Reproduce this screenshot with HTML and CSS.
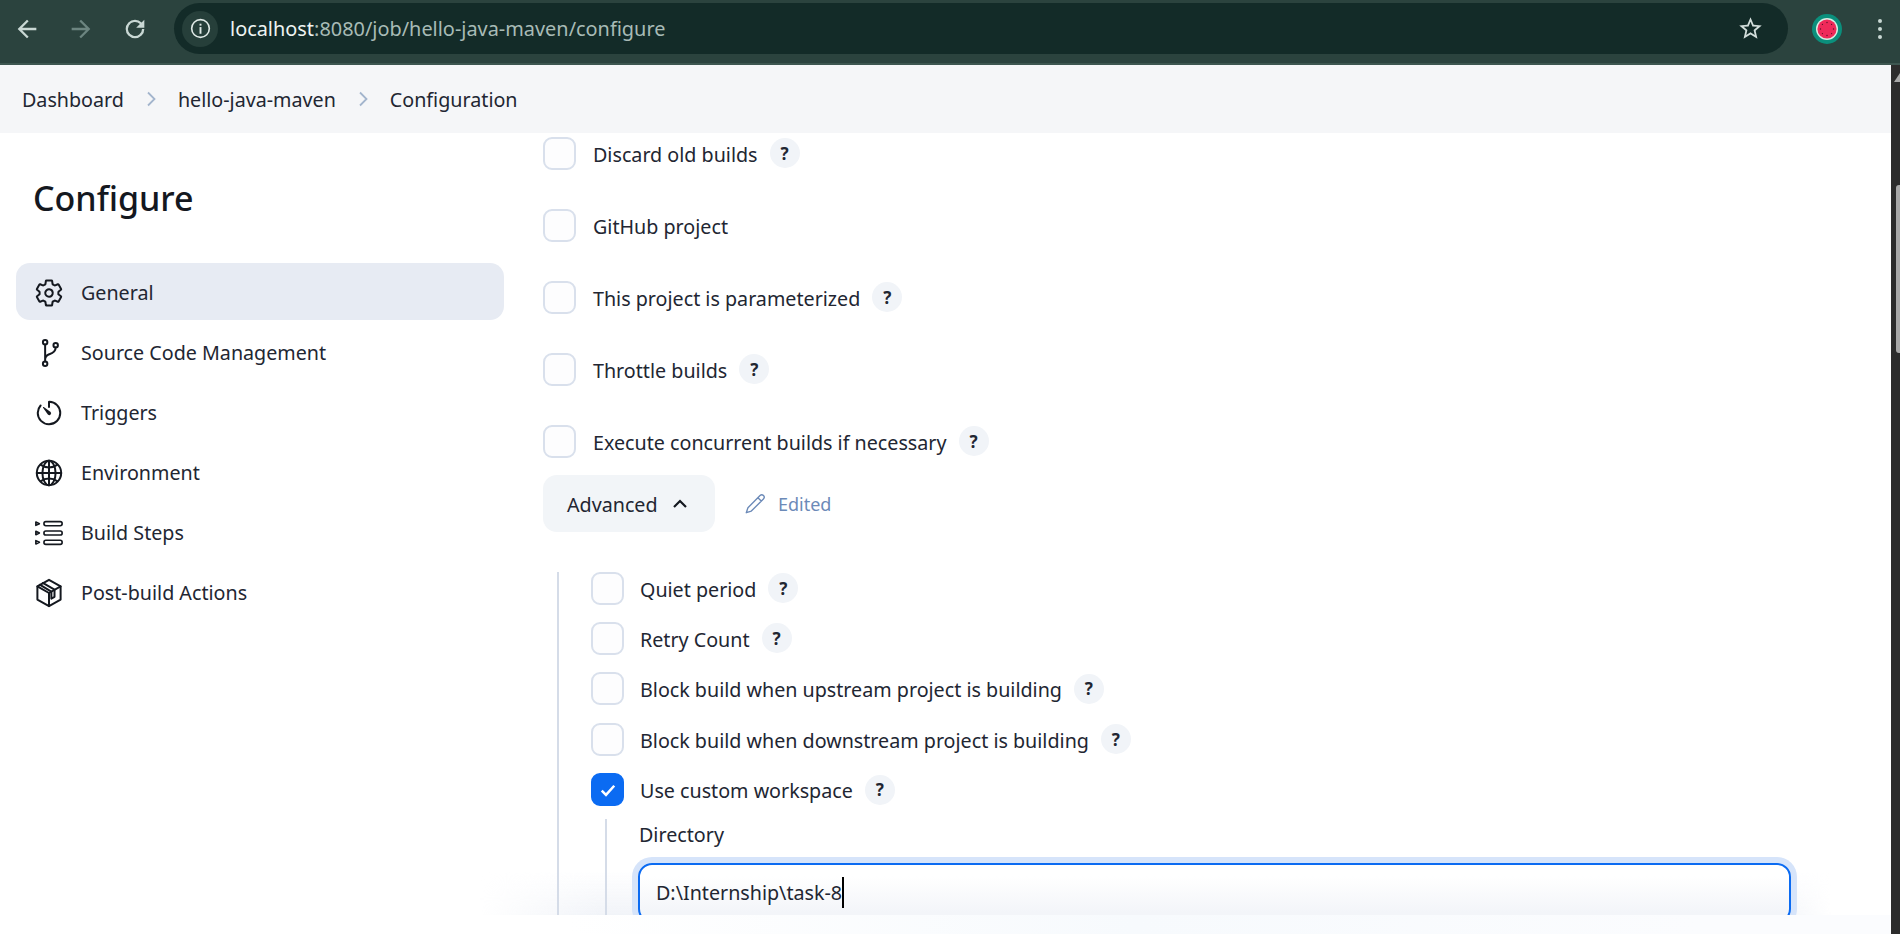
FILE: index.html
```html
<!DOCTYPE html>
<html lang="en">
<head>
    <meta charset="UTF-8">
    <title>hello-java-maven Config - Jenkins</title>
    <link rel="stylesheet" href="styles.css">
</head>
<body>

    <div class="browser-bar">
        <div class="browser-nav">
            <svg class="nav-icon" viewBox="0 0 24 24"><path d="M20 11H7.83l5.59-5.59L12 4l-8 8 8 8 1.41-1.41L7.83 13H20z"/></svg>
            <svg class="nav-icon nav-icon-off" viewBox="0 0 24 24"><path d="M4 11h12.17l-5.59-5.59L12 4l8 8-8 8-1.41-1.41L16.17 13H4z"/></svg>
            <svg class="nav-icon" viewBox="0 0 24 24"><path d="M17.65 6.35A7.95 7.95 0 0012 4a8 8 0 108 8h-2a6 6 0 11-1.78-4.22L13 11h7V4z"/></svg>
        </div>
        <div class="omnibox">
            <span class="site-chip">
                <svg viewBox="0 0 24 24"><circle cx="12" cy="12" r="9.2" fill="none" stroke="#dfe9e6" stroke-width="1.7"/><rect x="11" y="10.5" width="2" height="7" fill="#dfe9e6"/><rect x="11" y="7" width="2" height="2" fill="#dfe9e6"/></svg>
            </span>
            <span class="url"><span class="url-host">localhost</span>:8080/job/hello-java-maven/configure</span>
            <svg class="star" viewBox="0 0 24 24"><path d="M22 9.24l-7.19-.62L12 2 9.19 8.63 2 9.24l5.46 4.73L5.82 21 12 17.27 18.18 21l-1.63-7.03L22 9.24zM12 15.4l-3.76 2.27 1-4.28-3.32-2.88 4.38-.38L12 6.1l1.71 4.04 4.38.38-3.32 2.88 1 4.28L12 15.4z"/></svg>
        </div>
        <svg class="avatar" viewBox="0 0 30 30">
            <circle cx="15" cy="15" r="15" fill="#0b8f7c"/>
            <circle cx="15" cy="15" r="11" fill="#d8efe4"/>
            <circle cx="15" cy="15" r="9.6" fill="#ef2a5a"/>
            <g fill="#5a1028">
                <circle cx="15" cy="8.5" r=".7"/><circle cx="15" cy="21.5" r=".7"/><circle cx="8.5" cy="15" r=".7"/><circle cx="21.5" cy="15" r=".7"/>
                <circle cx="10.4" cy="10.4" r=".6"/><circle cx="19.6" cy="10.4" r=".6"/><circle cx="10.4" cy="19.6" r=".6"/><circle cx="19.6" cy="19.6" r=".6"/>
            </g>
        </svg>
        <div class="menu-dots"><i></i><i></i><i></i></div>
    </div>

    <div class="window">
        <div class="page">
            <div class="breadcrumbs">
                <span>Dashboard</span>
                <svg class="crumb-sep" viewBox="0 0 10 16"><path d="M2 1.5L8.5 8 2 14.5"/></svg>
                <span>hello-java-maven</span>
                <svg class="crumb-sep" viewBox="0 0 10 16"><path d="M2 1.5L8.5 8 2 14.5"/></svg>
                <span>Configuration</span>
            </div>

            <div class="content">
                <aside class="sidebar">
                    <h1 class="side-title">Configure</h1>
                    <nav class="side-nav">
                        <a class="side-item active">
                            <svg class="side-icon" viewBox="0 0 512 512"><path d="M262.29 192.31a64 64 0 1057.4 57.4 64.13 64.13 0 00-57.4-57.4zM416.39 256a154.34 154.34 0 01-1.53 20.79l45.21 35.46a10.81 10.81 0 012.45 13.75l-42.77 74a10.81 10.81 0 01-13.14 4.59l-44.9-18.08a16.11 16.11 0 00-15.17 1.75A164.48 164.48 0 01325 400.8a15.94 15.94 0 00-8.82 12.14l-6.73 47.89a11.08 11.08 0 01-10.68 9.17h-85.54a11.11 11.11 0 01-10.69-8.87l-6.72-47.82a16.07 16.07 0 00-9-12.22 155.3 155.3 0 01-21.46-12.57 16 16 0 00-15.11-1.71l-44.89 18.07a10.81 10.81 0 01-13.14-4.58l-42.77-74a10.8 10.8 0 012.45-13.75l38.21-30a16.05 16.05 0 006-14.08c-.36-4.17-.58-8.33-.58-12.5s.21-8.27.58-12.35a16 16 0 00-6.07-13.94l-38.19-30A10.81 10.81 0 0149.48 186l42.77-74a10.81 10.81 0 0113.14-4.59l44.9 18.08a16.11 16.11 0 0015.17-1.75A164.48 164.48 0 01187 111.2a15.94 15.94 0 008.82-12.14l6.73-47.89A11.08 11.08 0 01213.23 42h85.54a11.11 11.11 0 0110.69 8.87l6.72 47.82a16.07 16.07 0 009 12.22 155.3 155.3 0 0121.46 12.57 16 16 0 0015.11 1.71l44.89-18.07a10.81 10.81 0 0113.14 4.58l42.77 74a10.8 10.8 0 01-2.45 13.75l-38.21 30a16.05 16.05 0 00-6.05 14.08c.33 4.14.55 8.3.55 12.47z"/></svg>
                            General
                        </a>
                        <a class="side-item">
                            <svg class="side-icon" viewBox="0 0 512 512"><circle cx="190" cy="72" r="38"/><circle cx="190" cy="440" r="38"/><circle cx="370" cy="122" r="38"/><path d="M190 110v292M370 160c0 80-60 100-110 118-36 13-70 34-70 90"/></svg>
                            Source Code Management
                        </a>
                        <a class="side-item">
                            <svg class="side-icon" viewBox="0 0 512 512"><path d="M112.91 128A191.85 191.85 0 0064 254c-1.18 106.35 85.65 193.8 192 194 106.2.2 192-85.83 192-192 0-104.54-83.55-189.61-187.5-192a4.36 4.36 0 00-4.5 4.37V152"/><path class="solid" d="M233.38 278.63l-79-113a8.13 8.13 0 0111.32-11.32l113 79a32.5 32.5 0 01-37 53.37 33.21 33.21 0 01-8.32-8.05z"/></svg>
                            Triggers
                        </a>
                        <a class="side-item">
                            <svg class="side-icon" viewBox="0 0 512 512"><path d="M256 48C141.13 48 48 141.13 48 256s93.13 208 208 208 208-93.13 208-208S370.87 48 256 48z"/><path d="M256 48c-58.07 0-112.67 93.13-112.67 208S197.93 464 256 464s112.67-93.13 112.67-208S314.07 48 256 48z"/><path d="M117.33 117.33c38.24 27.15 86.38 43.34 138.67 43.34s100.43-16.19 138.67-43.34M394.67 394.67c-38.24-27.15-86.38-43.34-138.67-43.34s-100.43 16.19-138.67 43.34"/><path d="M256 48v416M464 256H48"/></svg>
                            Environment
                        </a>
                        <a class="side-item">
                            <svg class="side-icon thin" viewBox="0 0 512 512"><rect x="170" y="62" width="310" height="70" rx="32"/><rect x="170" y="221" width="310" height="70" rx="32"/><rect x="170" y="380" width="310" height="70" rx="32"/><path d="M32 68l60 29-60 29zM32 227l60 29-60 29zM32 386l60 29-60 29z"/></svg>
                            Build Steps
                        </a>
                        <a class="side-item">
                            <svg class="side-icon" viewBox="0 0 512 512"><path d="M256 32l198 112v224L256 480 58 368V144z"/><path d="M58 144l198 112 198-112M256 256v224"/><path d="M150 84l200 114v124l-54 30V232L98 114"/></svg>
                            Post-build Actions
                        </a>
                    </nav>
                </aside>

                <main class="form">
                    <div class="option-list">
                        <label class="option"><span class="check"></span><span>Discard old builds</span><span class="help">?</span></label>
                        <label class="option"><span class="check"></span><span>GitHub project</span></label>
                        <label class="option"><span class="check"></span><span>This project is parameterized</span><span class="help">?</span></label>
                        <label class="option"><span class="check"></span><span>Throttle builds</span><span class="help">?</span></label>
                        <label class="option"><span class="check"></span><span>Execute concurrent builds if necessary</span><span class="help">?</span></label>
                    </div>

                    <div class="advanced-row">
                        <button class="advanced-btn">
                            <span class="advanced-label">Advanced</span>
                            <svg viewBox="0 0 16 10"><path d="M2 8l6-6 6 6"/></svg>
                        </button>
                        <span class="edited">
                            <svg viewBox="0 0 24 24"><path d="M17.5 2.8a2.6 2.6 0 013.7 3.7L8 19.7 2.5 21.5 4.3 16zM15.2 5.2l3.6 3.6"/></svg>
                            Edited
                        </span>
                    </div>

                    <div class="advanced-body">
                        <div class="sub-list">
                            <label class="option"><span class="check"></span><span>Quiet period</span><span class="help">?</span></label>
                            <label class="option"><span class="check"></span><span>Retry Count</span><span class="help">?</span></label>
                            <label class="option"><span class="check"></span><span>Block build when upstream project is building</span><span class="help">?</span></label>
                            <label class="option"><span class="check"></span><span>Block build when downstream project is building</span><span class="help">?</span></label>
                            <label class="option"><span class="check checked"><svg viewBox="0 0 16 16"><path d="M3 8.5l3.4 3.4L13 4.6"/></svg></span><span>Use custom workspace</span><span class="help">?</span></label>
                        </div>
                        <div class="workspace">
                            <div class="field-label">Directory</div>
                            <div class="text-input">D:\Internship\task-8<span class="caret"></span></div>
                        </div>
                    </div>
                </main>
            </div>

            <div class="bottom-strip"></div>
        </div>

        <div class="scrollbar">
            <div class="scroll-arrow"></div>
            <div class="scroll-thumb"></div>
        </div>
    </div>

</body>
</html>
```

FILE: styles.css
```css
* {
    box-sizing: border-box;
}

html,
body {
    margin: 0;
    padding: 0;
    height: 934px;
    overflow: hidden;
}

body {
    display: flex;
    flex-direction: column;
    font-family: "Noto Sans", "Open Sans", sans-serif;
    font-size: 19.7px;
    color: #222632;
    background-color: #fff;
}

/* browser chrome */
.browser-bar {
    display: flex;
    align-items: center;
    height: 65px;
    flex: none;
    padding: 0 0 6px 13px;
    background-color: #2b433e;
    border-bottom: 2px solid #3d5650;
}

.browser-nav {
    display: flex;
    gap: 26px;
    width: 161px;
}

.nav-icon {
    width: 28px;
    height: 28px;
    fill: #c9d8d4;
}

.nav-icon-off {
    fill: #6c8580;
}

.omnibox {
    display: flex;
    align-items: center;
    width: 1614px;
    height: 51px;
    padding: 0 24px 0 8px;
    border-radius: 26px;
    background-color: #132b28;
}

.site-chip {
    display: flex;
    align-items: center;
    justify-content: center;
    width: 36px;
    height: 36px;
    margin-right: 12px;
    border-radius: 50%;
    background-color: #263f3a;
}

.site-chip svg {
    width: 23px;
    height: 23px;
}

.url {
    flex: 1;
    font-size: 19.9px;
    color: #a8bbb6;
}

.url-host {
    color: #eef4f2;
}

.star {
    width: 27px;
    height: 27px;
    fill: #d3dedb;
}

.avatar {
    width: 30px;
    height: 30px;
    margin-left: 24px;
}

.menu-dots {
    display: flex;
    flex-direction: column;
    gap: 4px;
    margin-left: 36px;
}

.menu-dots i {
    display: block;
    width: 4px;
    height: 4px;
    border-radius: 50%;
    background-color: #c9d8d4;
}

/* page */
.window {
    display: flex;
    flex: 1;
    min-height: 0;
}

.page {
    display: flex;
    flex-direction: column;
    flex: 1;
    min-width: 0;
}

.breadcrumbs {
    display: flex;
    align-items: center;
    flex: none;
    height: 68px;
    padding-left: 22px;
    background-color: #f5f6f8;
}

.crumb-sep {
    width: 10px;
    height: 16px;
    margin: 0 22px;
    fill: none;
    stroke: #a3b5cd;
    stroke-width: 1.8;
}

.content {
    position: relative;
    display: flex;
    flex: 1;
    min-height: 0;
    overflow: hidden;
}

.content::after {
    content: "";
    position: absolute;
    left: 480px;
    right: 60px;
    bottom: 0;
    height: 44px;
    pointer-events: none;
    background: linear-gradient(rgba(238, 241, 247, 0), rgba(238, 241, 247, .8));
    -webkit-mask-image: linear-gradient(90deg, transparent, #000 120px, #000 calc(100% - 60px), transparent);
}

.bottom-strip {
    flex: none;
    height: 19px;
    background: linear-gradient(90deg, #fff 30%, #f7fafd 60%, #fbfcfe 90%);
}

/* sidebar */
.sidebar {
    flex: none;
    width: 543px;
    padding: 44px 24px 0 16px;
}

.side-title {
    margin: 0 0 44px 17px;
    font-size: 34px;
    font-weight: 550;
    line-height: 42px;
    color: #14181f;
}

.side-nav {
    display: flex;
    flex-direction: column;
    gap: 3px;
    width: 488px;
}

.side-item {
    display: flex;
    align-items: center;
    gap: 17px;
    height: 57px;
    padding: 2px 0 0 18px;
    border-radius: 14px;
}

.side-item.active {
    background-color: #e7ebf3;
}

.side-icon {
    width: 30px;
    height: 30px;
    flex: none;
    fill: none;
    stroke: #14181f;
    stroke-width: 34;
    stroke-linecap: round;
    stroke-linejoin: round;
}

.side-icon.thin {
    stroke-width: 28;
}

.side-icon .solid {
    fill: #14181f;
    stroke: none;
}

/* form */
.form {
    position: relative;
    z-index: 1;
    flex: 1;
    min-width: 0;
    padding-top: 4px;
}

.option-list {
    display: flex;
    flex-direction: column;
    gap: 40px;
}

.option {
    display: flex;
    align-items: center;
    height: 32px;
}

.check + span {
    padding-top: 2px;
}

.check {
    display: flex;
    align-items: center;
    justify-content: center;
    width: 33px;
    height: 33px;
    flex: none;
    margin-right: 17px;
    border: 2.5px solid #d9e0ec;
    border-radius: 9px;
    background-color: #fdfdfe;
}

.sub-list .check {
    margin-right: 16px;
}

.check.checked {
    border-color: #0b6bf2;
    background-color: #0b6bf2;
}

.check svg {
    width: 20px;
    height: 20px;
    fill: none;
    stroke: #fff;
    stroke-width: 2;
}

.help {
    display: flex;
    align-items: center;
    justify-content: center;
    width: 30px;
    height: 30px;
    margin-left: 12px;
    border-radius: 50%;
    background-color: #f1f4f8;
    font-size: 17px;
    font-weight: 700;
    line-height: 1;
}

.advanced-row {
    display: flex;
    align-items: center;
    gap: 30px;
    margin-top: 18px;
}

.advanced-btn {
    display: flex;
    align-items: center;
    justify-content: space-between;
    width: 172px;
    height: 57px;
    padding: 0 27px 0 24px;
    border: 0;
    border-radius: 14px;
    background-color: #f2f5f8;
    color: inherit;
    font: inherit;
}

.advanced-label {
    padding-top: 2px;
}

.advanced-btn svg {
    width: 16px;
    height: 10px;
    fill: none;
    stroke: #14181f;
    stroke-width: 2.2;
}

.edited {
    display: flex;
    align-items: center;
    gap: 12px;
    font-size: 18px;
    color: #6c8ab8;
}

.edited svg {
    width: 22px;
    height: 22px;
    margin-left: -1px;
    fill: none;
    stroke: #6c8ab8;
    stroke-width: 1.5;
    stroke-linejoin: round;
}

.advanced-body {
    margin: 40px 0 0 14px;
    padding-left: 32px;
    border-left: 2px solid #d5dce8;
}

.sub-list {
    display: flex;
    flex-direction: column;
    gap: 18.4px;
}

.workspace {
    margin: 13px 0 0 14px;
    padding-left: 32px;
    border-left: 2px solid #d5dce8;
}

.field-label {
    line-height: 30px;
    padding-top: 1px;
}

.text-input {
    display: flex;
    align-items: center;
    width: 1153px;
    height: 60px;
    margin: 13px 0 0 -1px;
    padding-left: 16px;
    border: 2px solid #0b6bf2;
    border-radius: 14px;
    background: linear-gradient(#fff 20%, #f3f5f9 85%);
    box-shadow: 0 0 0 6px #d6e4fa;
}

.caret {
    width: 2px;
    height: 31px;
    background-color: #000;
}

/* scrollbar */
.scrollbar {
    flex: none;
    width: 9px;
    padding-top: 8px;
    background-color: #2c2c2c;
}

.scroll-arrow {
    width: 0;
    height: 0;
    margin: 0 0 103px 3px;
    border-left: 6px solid transparent;
    border-bottom: 9px solid #a8a8a8;
}

.scroll-thumb {
    width: 4px;
    height: 168px;
    margin-left: 5px;
    border-radius: 3px 0 0 3px;
    background-color: #a8a8a8;
}
```
